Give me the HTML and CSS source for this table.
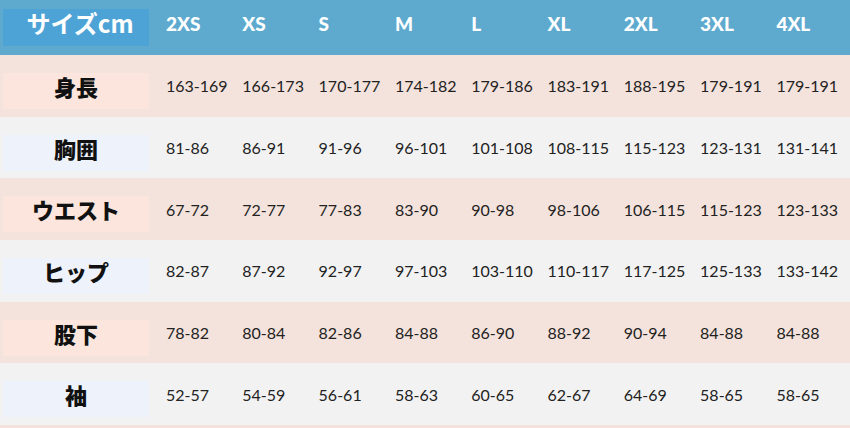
FILE: index.html
```html
<!DOCTYPE html>
<html lang="ja">
<head>
<meta charset="utf-8">
<link rel="stylesheet" href="styles.css">
</head>
<body>
<div class="chart">
  <div class="row head">
    <div class="label"><span class="box">サイズcm</span></div>
    <div class="cell">2XS</div><div class="cell">XS</div><div class="cell">S</div><div class="cell">M</div><div class="cell">L</div><div class="cell">XL</div><div class="cell">2XL</div><div class="cell">3XL</div><div class="cell">4XL</div>
  </div>
  <div class="row pink">
    <div class="label"><span class="box">身長</span></div>
    <div class="cell">163-169</div><div class="cell">166-173</div><div class="cell">170-177</div><div class="cell">174-182</div><div class="cell">179-186</div><div class="cell">183-191</div><div class="cell">188-195</div><div class="cell">179-191</div><div class="cell">179-191</div>
  </div>
  <div class="row grey">
    <div class="label"><span class="box">胸囲</span></div>
    <div class="cell">81-86</div><div class="cell">86-91</div><div class="cell">91-96</div><div class="cell">96-101</div><div class="cell">101-108</div><div class="cell">108-115</div><div class="cell">115-123</div><div class="cell">123-131</div><div class="cell">131-141</div>
  </div>
  <div class="row pink">
    <div class="label"><span class="box">ウエスト</span></div>
    <div class="cell">67-72</div><div class="cell">72-77</div><div class="cell">77-83</div><div class="cell">83-90</div><div class="cell">90-98</div><div class="cell">98-106</div><div class="cell">106-115</div><div class="cell">115-123</div><div class="cell">123-133</div>
  </div>
  <div class="row grey">
    <div class="label"><span class="box">ヒップ</span></div>
    <div class="cell">82-87</div><div class="cell">87-92</div><div class="cell">92-97</div><div class="cell">97-103</div><div class="cell">103-110</div><div class="cell">110-117</div><div class="cell">117-125</div><div class="cell">125-133</div><div class="cell">133-142</div>
  </div>
  <div class="row pink">
    <div class="label"><span class="box">股下</span></div>
    <div class="cell">78-82</div><div class="cell">80-84</div><div class="cell">82-86</div><div class="cell">84-88</div><div class="cell">86-90</div><div class="cell">88-92</div><div class="cell">90-94</div><div class="cell">84-88</div><div class="cell">84-88</div>
  </div>
  <div class="row grey">
    <div class="label"><span class="box">袖</span></div>
    <div class="cell">52-57</div><div class="cell">54-59</div><div class="cell">56-61</div><div class="cell">58-63</div><div class="cell">60-65</div><div class="cell">62-67</div><div class="cell">64-69</div><div class="cell">58-65</div><div class="cell">58-65</div>
  </div>
  <div class="row pink tail"></div>
</div>
</body>
</html>
```
FILE: styles.css
```css
html, body {
  margin: 0;
  padding: 0;
}
body {
  width: 850px;
  height: 428px;
  overflow: hidden;
  background: #f4e3dc;
  font-family: Lato, "Noto Sans CJK JP", sans-serif;
}
.chart {
  display: flex;
  flex-direction: column;
}
.row {
  display: grid;
  grid-template-columns: 152px repeat(9, 76.3px) 1fr;
  height: 61.67px;
  align-items: center;
}
.row.tail {
  height: 3px;
}
.head {
  height: 55px;
  background: #5eaacf;
  color: #fff;
  align-items: start;
}
.pink { background: #f4e3dc; }
.grey { background: #f2f2f2; }

.label {
  align-self: stretch;
  display: flex;
  flex-direction: column;
  padding: 0 3px;
}
.box {
  margin-top: 18px;
  height: 36px;
  padding-bottom: 10px;
  box-sizing: border-box;
  display: flex;
  align-items: center;
  justify-content: center;
  font-family: "Noto Sans CJK JP", sans-serif;
  font-weight: 900;
  font-size: 22px;
  color: #111;
}
.pink .box { background: #fbe5dc; }
.grey .box { background: #eef2fa; }
.head .box {
  margin-top: 9px;
  height: 37px;
  padding-bottom: 10px;
  padding-left: 8px;
  background: #4ea3d6;
  color: #fff;
  font-weight: 700;
  font-size: 24px;
}
.cell {
  padding-left: 14px;
  font-size: 16px;
  color: #222;
  white-space: nowrap;
}
.head .cell {
  font-weight: 900;
  font-size: 19px;
  color: #fff;
  padding-top: 12px;
  line-height: 24px;
}
```
